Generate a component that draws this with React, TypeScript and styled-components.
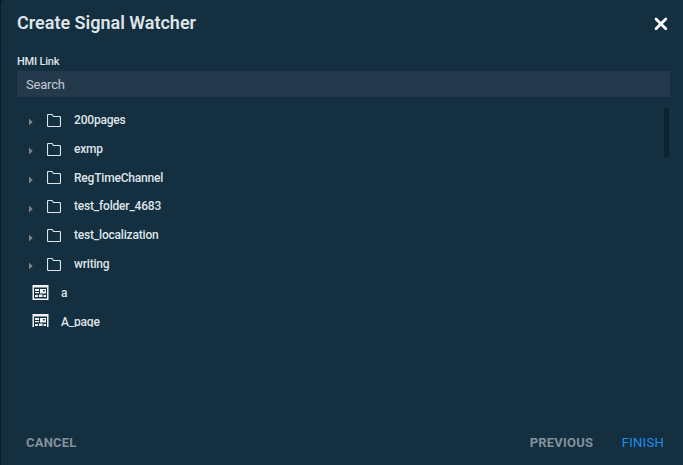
import React from "react";
import styled, { createGlobalStyle } from "styled-components";

const GlobalStyle = createGlobalStyle`
  * { box-sizing: border-box; }
  body { margin: 0; background: #0b1a24; font-family: Roboto, "Liberation Sans", sans-serif; }
`;

const Dialog = styled.main`
  width: 682px;
  height: 465px;
  margin-left: 1px;
  display: flex;
  flex-direction: column;
  background: #142f40;
  border-top-left-radius: 3px;
  color: #dfe4e8;
  overflow: hidden;
`;

const Header = styled.header`
  display: flex;
  align-items: center;
  justify-content: space-between;
  height: 46px;
  padding: 0 15px 0 16px;
`;

const Title = styled.h1`
  margin: 0;
  font-size: 18px;
  font-weight: 600;
  line-height: 24px;
  letter-spacing: -0.01px;
`;

const CloseButton = styled.button`
  display: flex;
  margin: 2px 0 0;
  padding: 0;
  border: 0;
  background: none;
  color: #fff;
`;

const Field = styled.label`
  display: flex;
  flex-direction: column;
  padding: 7px 13px 0 16px;
`;

const FieldLabel = styled.span`
  height: 18px;
  font-size: 11px;
  font-weight: 500;
  line-height: 17px;
  letter-spacing: -0.2px;
`;

const SearchInput = styled.input`
  height: 26px;
  padding: 1px 9px 0;
  border: 0;
  border-radius: 0;
  outline: 0;
  background: #25394d;
  color: #dfe4e8;
  font: 400 13px Roboto, "Liberation Sans", sans-serif;
  letter-spacing: -0.2px;
  &::placeholder { color: #c3cad0; opacity: 1; }
`;

const ListArea = styled.div`
  display: flex;
  justify-content: space-between;
  height: 222px;
  margin-top: 8px;
  padding-right: 14px;
  overflow: hidden;
`;

const Tree = styled.ul`
  margin: 0;
  padding: 0;
  list-style: none;
`;

const Row = styled.li<{ $kind: "folder" | "page" }>`
  display: flex;
  align-items: center;
  height: 28.8px;
  padding-left: ${(p) => (p.$kind === "folder" ? 28 : 31)}px;
`;

const Arrow = styled.svg`
  width: 4px;
  height: 8px;
  margin: 6px 14px 0 0;
  fill: #7f8286;
`;

const FolderIcon = styled.svg`
  width: 14px;
  height: 13px;
  margin: 2px 13px 0 0;
`;

const PageIcon = styled.svg`
  width: 17px;
  height: 15px;
  margin: 1px 12px 0 0;
`;

const Name = styled.span`
  padding-top: 1.2px;
  font-size: 12px;
  font-weight: 500;
  line-height: 18px;
  letter-spacing: -0.19px;
`;

const ScrollThumb = styled.div`
  width: 5px;
  height: 49px;
  margin-top: 3px;
  background: #0c222f;
`;

const Footer = styled.footer`
  display: flex;
  align-items: center;
  height: 44px;
  margin-top: auto;
  padding: 0 19px 0 25px;
`;

const Action = styled.button<{ $primary?: boolean }>`
  margin: 0 0 0 ${(p) => (p.$primary ? 28.5 : 0)}px;
  padding: 0;
  border: 0;
  background: none;
  color: ${(p) => (p.$primary ? "#1e90ee" : "#83919b")};
  font: ${(p) => (p.$primary ? 400 : 700)} 13px/18px Roboto, "Liberation Sans", sans-serif;
  letter-spacing: ${(p) => (p.$primary ? 0.3 : 0.2)}px;
  &:first-child { margin-right: auto; }
`;

const folders = ["200pages", "exmp", "RegTimeChannel", "test_folder_4683", "test_localization", "writing"];
const pages = ["a", "A_page"];

export default function App() {
  return (
    <>
      <GlobalStyle />
      <Dialog>
        <Header>
          <Title>Create Signal Watcher</Title>
          <CloseButton aria-label="Close">
            <svg width="14" height="14" viewBox="0 0 14 14">
              <path d="M2 2 11.8 11.8M11.8 2 2 11.8" fill="none" stroke="currentColor" strokeWidth="2.8" strokeLinecap="round" />
            </svg>
          </CloseButton>
        </Header>
        <Field>
          <FieldLabel>HMI Link</FieldLabel>
          <SearchInput placeholder="Search" />
        </Field>
        <ListArea>
          <Tree>
            {folders.map((name) => (
              <Row key={name} $kind="folder">
                <Arrow viewBox="0 0 4 8"><path d="M0 .5 3.7 4 0 7.5Z" /></Arrow>
                <FolderIcon viewBox="0 0 14 13">
                  <path d="M1.5.5H5L6.5 2.5H12.5Q13.5 2.5 13.5 3.5V11.5Q13.5 12.5 12.5 12.5H1.5Q.5 12.5.5 11.5V1.5Q.5.5 1.5.5Z" fill="none" stroke="#dfe4e8" strokeWidth="1.15" />
                </FolderIcon>
                <Name>{name}</Name>
              </Row>
            ))}
            {pages.map((name) => (
              <Row key={name} $kind="page">
                <PageIcon viewBox="0 0 17 15">
                  <path fill="#f1f4f6" fillRule="evenodd" d="M.5 0H16.5V15H.5ZM2 2.6V13.4H15V2.6Z" />
                  <path fill="#f1f4f6" d="M3 4H7V6H3ZM3 7H7V8.3H3ZM8 4H14V8.6H8ZM3 10H6V12H3ZM7 9.5H10.5V12H7ZM11.5 10H14V12H11.5Z" />
                  <path fill="#142f40" d="M11 5H12.7V6.5H11Z" />
                </PageIcon>
                <Name>{name}</Name>
              </Row>
            ))}
          </Tree>
          <ScrollThumb />
        </ListArea>
        <Footer>
          <Action>CANCEL</Action>
          <Action>PREVIOUS</Action>
          <Action $primary>FINISH</Action>
        </Footer>
      </Dialog>
    </>
  );
}
